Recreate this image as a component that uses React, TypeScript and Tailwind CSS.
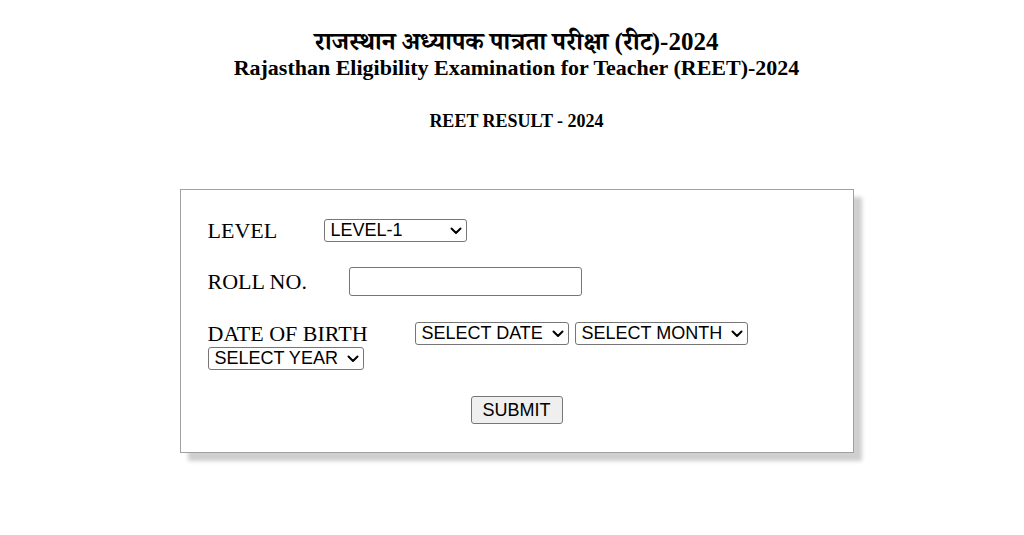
import React from "react";

const serif = { fontFamily: '"Liberation Serif", "Times New Roman", "Noto Serif Devanagari", "Noto Sans Devanagari", "Lohit Devanagari", FreeSerif, serif' };

function Chevron() {
  return (
    <svg width="12" height="8" viewBox="0 0 12 8" className="pointer-events-none absolute right-[5px] top-1/2 -translate-y-1/2">
      <polyline points="1.5,1.5 6,6 10.5,1.5" fill="none" stroke="#000" strokeWidth="2" strokeLinecap="round" strokeLinejoin="round" />
    </svg>
  );
}

function Sel({ w, label, options }: { w: string; label: string; options: string[] }) {
  return (
    <div className={`relative inline-block h-[23px] ${w}`}>
      <select
        className="h-full w-full appearance-none rounded-[3px] border border-[#767676] bg-white pl-[6px] pr-[20px] text-[18px] leading-[21px] text-black font-['Liberation_Sans',Arial,sans-serif]"
        defaultValue={label}
      >
        {[label, ...options].map((o) => (
          <option key={o} value={o}>
            {o}
          </option>
        ))}
      </select>
      <Chevron />
    </div>
  );
}

export default function App() {
  return (
    <div className="min-h-[535px] w-full bg-white text-black" style={serif}>
      <div className="flex flex-col items-center pl-[9px] pt-[29px]">
        <div className="text-[25px] font-bold leading-[26px]">राजस्थान अध्यापक पात्रता परीक्षा (रीट)-2024</div>
        <div className="text-[22px] font-bold leading-[26px]">Rajasthan Eligibility Examination for Teacher (REET)-2024</div>
        <div className="mt-[30px] text-[18px] font-bold leading-[20px]">REET RESULT - 2024</div>

        <div className="mt-[58px] w-[674px] border border-[#a0a0a0] bg-white pb-[28px] pl-[27px] pr-[27px] pt-[29px] shadow-[8px_8px_4px_#cfcfcf]">
          <div className="flex h-[23px] items-center">
            <span className="w-[116px] text-[22px] leading-[23px]">LEVEL</span>
            <Sel w="w-[143px]" label="LEVEL-1" options={["LEVEL-2"]} />
          </div>

          <div className="mt-[25px] flex h-[29px] items-center">
            <span className="w-[141px] text-[22px] leading-[23px]">ROLL NO.</span>
            <input type="text" className="h-[29px] w-[233px] rounded-[3px] border border-[#767676] bg-white px-1 text-[16px]" />
          </div>

          <div className="mt-[26px] flex flex-wrap items-center gap-x-[6px] gap-y-[2px]">
            <span className="w-[201px] text-[22px] leading-[23px]">DATE OF BIRTH</span>
            <Sel w="w-[154px]" label="SELECT DATE" options={["01", "02", "03"]} />
            <Sel w="w-[173px]" label="SELECT MONTH" options={["JANUARY", "FEBRUARY"]} />
            <Sel w="w-[156px]" label="SELECT YEAR" options={["2000", "2001"]} />
          </div>

          <div className="mt-[26px] flex justify-center">
            <button
              type="button"
              className="h-[28px] w-[92px] rounded-[3px] border border-[#767676] bg-[#efefef] text-[18px] leading-[26px] text-black font-['Liberation_Sans',Arial,sans-serif]"
            >
              SUBMIT
            </button>
          </div>
        </div>
      </div>
    </div>
  );
}
